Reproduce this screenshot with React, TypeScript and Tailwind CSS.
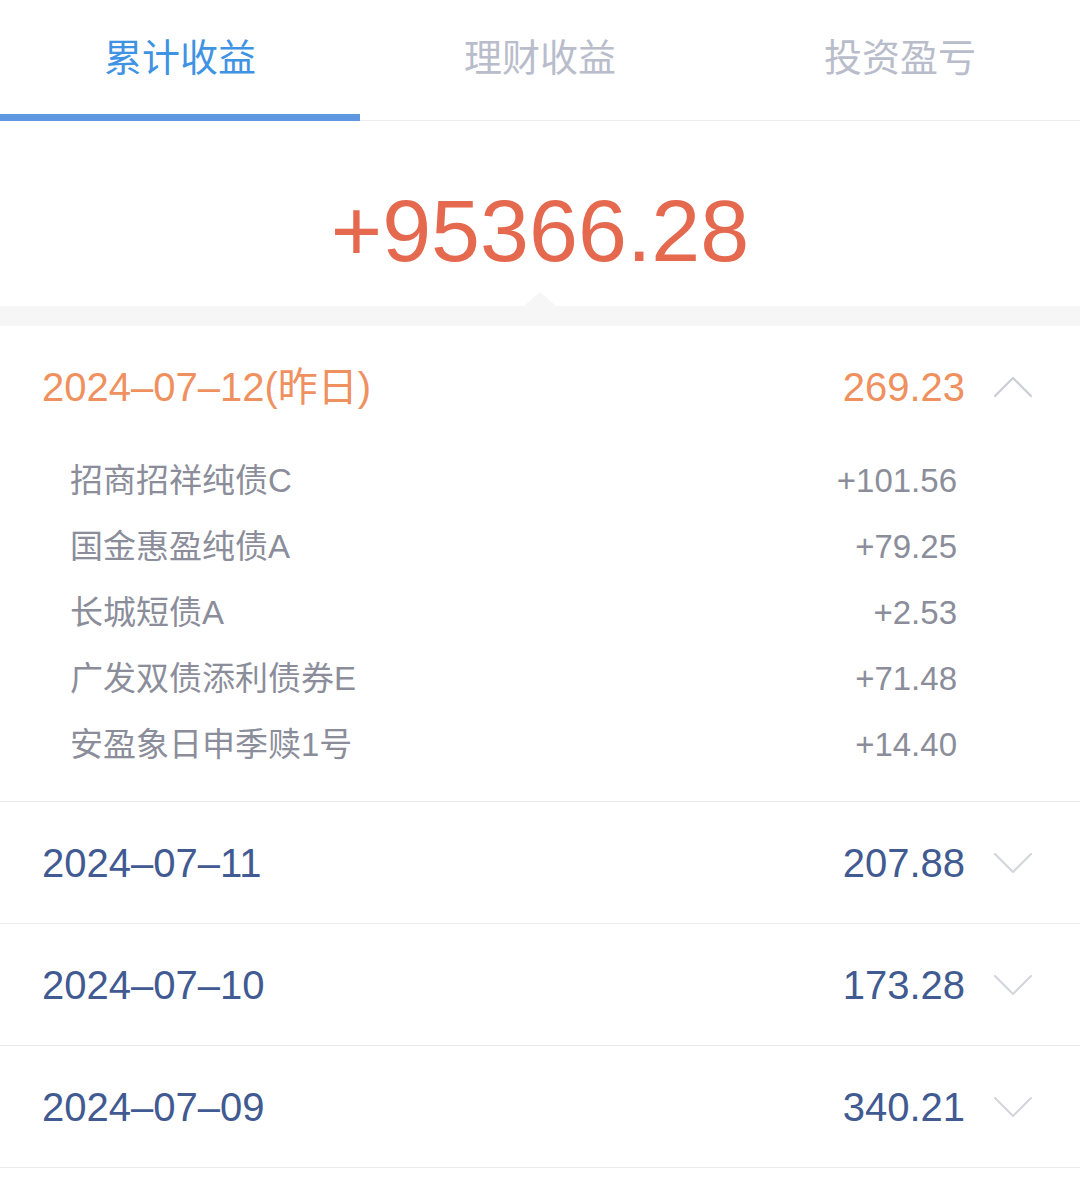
// 收益明细页 — 累计收益 tab
import { useState } from 'react';

type Item = { name: string; amount: string };
type Day = { date: string; total: string; items?: Item[] };

const TABS = ['累计收益', '理财收益', '投资盈亏'];

const DAYS: Day[] = [
  {
    date: '2024–07–12(昨日)',
    total: '269.23',
    items: [
      { name: '招商招祥纯债C', amount: '+101.56' },
      { name: '国金惠盈纯债A', amount: '+79.25' },
      { name: '长城短债A', amount: '+2.53' },
      { name: '广发双债添利债券E', amount: '+71.48' },
      { name: '安盈象日申季赎1号', amount: '+14.40' },
    ],
  },
  { date: '2024–07–11', total: '207.88' },
  { date: '2024–07–10', total: '173.28' },
  { date: '2024–07–09', total: '340.21' },
];

function Chevron({ up }: { up: boolean }) {
  return (
    <svg width="40" height="24" viewBox="0 0 40 24" className="shrink-0" fill="none">
      <path
        d={up ? 'M2 21 L20 3 L38 21' : 'M2 3 L20 21 L38 3'}
        stroke={up ? '#c9cdd5' : '#d3d6dc'}
        strokeWidth="2.2"
        strokeLinecap="round"
        strokeLinejoin="round"
      />
    </svg>
  );
}

export default function App() {
  const [tab, setTab] = useState(0);
  const [open, setOpen] = useState(0);

  return (
    <div
      className="min-h-screen w-[1080px] bg-white"
      style={{ fontFamily: '"Liberation Sans", "Noto Sans CJK SC", sans-serif' }}
    >
      {/* tabs */}
      <div className="flex h-[121px] border-b border-[#ededed]">
        {TABS.map((t, i) => (
          <button
            key={t}
            onClick={() => setTab(i)}
            className={`relative flex flex-1 items-center justify-center pb-[4px] text-[38px] ${
              i === tab ? 'text-[#3f93e3]' : 'text-[#b9bdcb]'
            }`}
          >
            {t}
            {i === tab && <span className="absolute bottom-[-1px] left-0 right-0 h-[7px] bg-[#5f98e1]" />}
          </button>
        ))}
      </div>

      {/* total */}
      <div className="flex h-[185px] items-center justify-center pt-[34px]">
        <span className="text-[88px] leading-none text-[#e5694f]">+95366.28</span>
      </div>

      {/* band with notch */}
      <div className="relative h-[20px] bg-[#f6f6f6]">
        <span className="absolute left-[524px] top-[-14px] h-0 w-0 border-x-[16px] border-b-[14px] border-x-transparent border-b-[#f6f6f6]" />
      </div>

      {/* days */}
      <div>
        {DAYS.map((d, i) => {
          const isOpen = open === i && !!d.items;
          return (
            <div key={d.date} className="border-b border-[#ececec]">
              <button
                onClick={() => setOpen(open === i ? -1 : i)}
                className={`flex w-full items-center pl-[42px] pr-[47px] text-[40px] ${
                  isOpen ? 'h-[122px]' : 'h-[121px]'
                }`}
              >
                <span className={`flex-1 text-left ${isOpen ? 'text-[#ef915f]' : 'text-[#415a91]'}`}>
                  {d.date}
                </span>
                <span className={`mr-[28px] ${isOpen ? 'text-[#ef915f]' : 'text-[#415a91]'}`}>{d.total}</span>
                <Chevron up={isOpen} />
              </button>
              {isOpen && (
                <div className="pb-[23px] pl-[70px] pr-[123px]">
                  {d.items!.map((it) => (
                    <div key={it.name} className="flex h-[66px] items-center justify-between text-[33px] text-[#8b8e9a]">
                      <span>{it.name}</span>
                      <span>{it.amount}</span>
                    </div>
                  ))}
                </div>
              )}
            </div>
          );
        })}
      </div>
    </div>
  );
}
